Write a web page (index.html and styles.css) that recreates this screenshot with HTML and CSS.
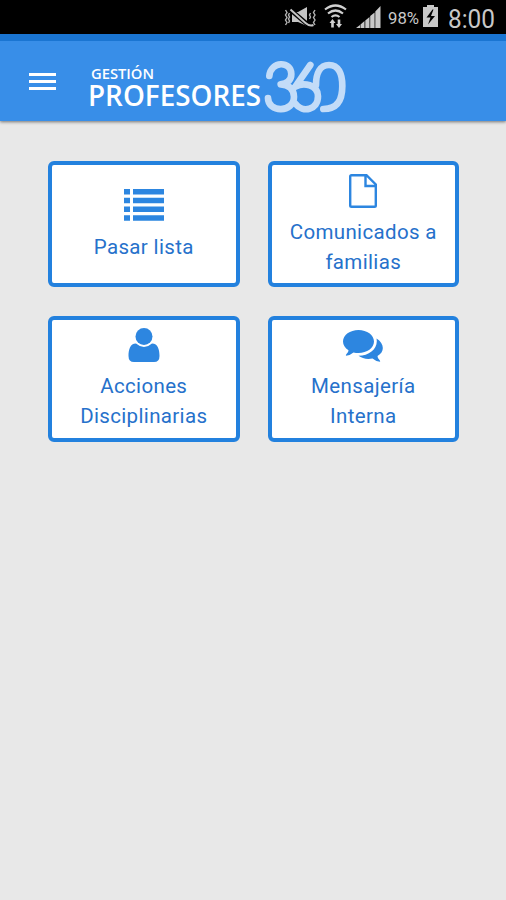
FILE: index.html
```html
<!DOCTYPE html>
<html lang="es">
<head>
    <meta charset="UTF-8">
    <meta name="viewport" content="width=device-width, initial-scale=1.0">
    <title>Gestión Profesores 360</title>
    <link rel="stylesheet" href="styles.css">
</head>
<body>
    <div class="status-bar">
        <svg class="status-icons" viewBox="280 0 226 34" width="226" height="34">
            <!-- muted / vibrate -->
            <g fill="none" stroke="#b4b4b4" stroke-width="1.4">
                <path d="M285.500 10l1.500 2.500-1.500 2.500 1.500 2.500-1.500 2.500 1.500 2.500-1.500 2.500M289.500 13l-1 2 1 2-1 2 1 2-1 2"/>
                <path d="M315 10l-1.500 2.500 1.500 2.500-1.500 2.500 1.500 2.500-1.500 2.500 1.500 2.500M310.500 13l-1 2 1 2-1 2"/>
            </g>
            <path d="M292 12h6l9-5v19l-9-4h-6z" fill="#c4c4c4"/>
            <path d="M290 9.500l20 17" stroke="#000" stroke-width="4.500"/>
            <path d="M290.500 9.500l15 13.500q4 3.500 8 2" fill="none" stroke="#c4c4c4" stroke-width="2"/>
            <!-- wifi -->
            <g fill="none" stroke="#d0d0d0" stroke-width="2.200">
                <path d="M325 9.500q10.500-8 21 0M328 13.500q7.500-6 15 0M331.500 17q4-3.300 8 0"/>
            </g>
            <path d="M332.500 19l3 4h-1.700v4.500h-2.600V23h-1.700zM339 28l-3-4h1.700v-4.500h2.600V24h1.700z" fill="#d0d0d0"/>
            <!-- signal -->
            <path d="M356 28l4-3v3zM360.500 24.500l4-3.500V28h-4zM365.300 20.500l4.200-3.500v11h-4.200zM370.200 16l4.400-3.500V28h-4.400zM375.300 11.500l5.200-5.500v22h-5.200z" fill="#c8c8c8"/>
            <text class="battery-level" x="388" y="24" textLength="31" lengthAdjust="spacingAndGlyphs">98%</text>
            <!-- battery -->
            <path d="M423 7h4V5h7v2h4v20h-15z" fill="#c8c8c8"/>
            <path d="M432.500 9.500l-6 8h4l-2.500 7 7-8.500h-4l2.500-6.500z" fill="#000"/>
            <text class="clock" x="448" y="27.500" textLength="47" lengthAdjust="spacingAndGlyphs">8:00</text>
        </svg>
    </div>

    <header class="toolbar">
        <button class="menu-button" aria-label="Menú">
            <span></span>
            <span></span>
            <span></span>
        </button>
        <svg class="logo" viewBox="84 41 266 80" width="266" height="80">
            <text class="logo-small" x="91" y="78.500" textLength="63" lengthAdjust="spacingAndGlyphs">GESTIÓN</text>
            <text class="logo-big" x="88" y="105.700" textLength="173" lengthAdjust="spacingAndGlyphs">PROFESORES</text>
            <path class="logo-360" transform="translate(180 30) scale(.3333)" d="M268 138C272 92 334 92 334 132C334 150 322 160 302 163C326 163 342 178 342 200C342 249 264 249 264 204M391 105L346 170C370 156 414 163 414 199C414 241 368 249 347 222M430 237C476 237 487 205 487 168C487 130 475 105 447 105C420 105 408 130 408 165"/>
        </svg>
    </header>

    <main class="menu-grid">
        <a class="card">
            <svg class="icon" viewBox="0 0 40 34" width="40" height="34">
                <path d="M0 0h6v5.500H0zM9 0h31v5.500H9zM0 8.800h6v5.500H0zM9 8.800h31v5.500H9zM0 17.600h6v5.500H0zM9 17.600h31v5.500H9zM0 26.300h6v5.500H0zM9 26.300h31v5.500H9z"/>
            </svg>
            <span>Pasar lista</span>
        </a>
        <a class="card">
            <svg class="icon icon-line" viewBox="0 0 28 34" width="28" height="34">
                <path d="M2.500 1.200H17.500L26.800 10.500V31.500Q26.800 32.800 25.500 32.800H2.500Q1.200 32.800 1.200 31.500V2.500Q1.200 1.200 2.500 1.200zM16.500 1.500V12H26.500"/>
            </svg>
            <span>Comunicados a familias</span>
        </a>
        <a class="card">
            <svg class="icon" viewBox="0 0 32 34" width="32" height="34">
                <circle cx="16" cy="8.500" r="8.500"/>
                <path d="M8 15.500Q16 22.500 24 15.500C30 15.500 31.500 22 31.500 28Q31.500 34 26 34H6Q.5 34 .5 28C.5 22 2 15.500 8 15.500z"/>
            </svg>
            <span>Acciones Disciplinarias</span>
        </a>
        <a class="card">
            <svg class="icon" viewBox="0 0 40 34" width="40" height="34">
                <path d="M15.500 2C24 2 31 7 31 13.500S24 25 15.500 25Q13 25 10.500 24.500Q7 27.500 3 27.800Q2.500 27 3.500 26Q5.500 24.500 5.500 22.200C2 20 0 17 0 13.500C0 7 7 2 15.500 2z"/>
                <path d="M33.500 10.500C41.500 15.500 42 23.500 34.500 28Q34.500 30.500 36.500 32Q37.500 33 37 33.800Q33 33.500 29.500 30.500C24 31.500 19 30.500 15.500 27.800C27 27.800 35.500 20 33.500 10.500z"/>
            </svg>
            <span>Mensajería Interna</span>
        </a>
    </main>
</body>
</html>
```
FILE: styles.css
```css
* {
    box-sizing: border-box;
}
body {
    margin: 0;
    min-height: 900px;
    background-color: #e8e8e8;
    font-family: Roboto, sans-serif;
}
.status-bar {
    display: flex;
    justify-content: flex-end;
    height: 34px;
    background-color: #000;
}
.battery-level {
    font-size: 16px;
    fill: #c8c8c8;
}
.clock {
    font-size: 25px;
    fill: #c8c8c8;
}
.toolbar {
    display: flex;
    align-items: flex-end;
    height: 87px;
    border-top: 7px solid #1a75d2;
    background-color: #388ee8;
    box-shadow: 0 1px 3px rgba(0, 0, 0, 0.5);
}
.menu-button {
    display: flex;
    flex-direction: column;
    gap: 4px;
    width: 84px;
    height: 80px;
    padding: 32px 28px 0 29px;
    border: none;
    background: none;
}
.menu-button span {
    height: 3px;
    width: 27px;
    background-color: #fff;
}
.logo-small,
.logo-big {
    font-family: "Open Sans", sans-serif;
    font-weight: 600;
    fill: #fff;
}
.logo-small {
    font-size: 15px;
}
.logo-big {
    font-size: 29.5px;
}
.logo-360 {
    fill: none;
    stroke: #c3dcf8;
    stroke-width: 20;
    stroke-linecap: round;
    stroke-linejoin: round;
}
.menu-grid {
    display: grid;
    grid-template-columns: 191.5px 191.5px;
    row-gap: 28.5px;
    column-gap: 28px;
    padding: 40px 0 0 48px;
}
.card {
    display: flex;
    flex-direction: column;
    align-items: center;
    justify-content: center;
    height: 126px;
    padding: 2px 10px 0;
    border: 4px solid #2381de;
    border-radius: 6px;
    background-color: #fff;
    color: #2671cb;
    font-size: 20.5px;
    line-height: 30px;
    letter-spacing: 0.35px;
    text-align: center;
}
.icon {
    margin-bottom: 9px;
    fill: #2d86e0;
}
.icon-line {
    fill: none;
    stroke: #2d86e0;
    stroke-width: 2.4;
}
```
